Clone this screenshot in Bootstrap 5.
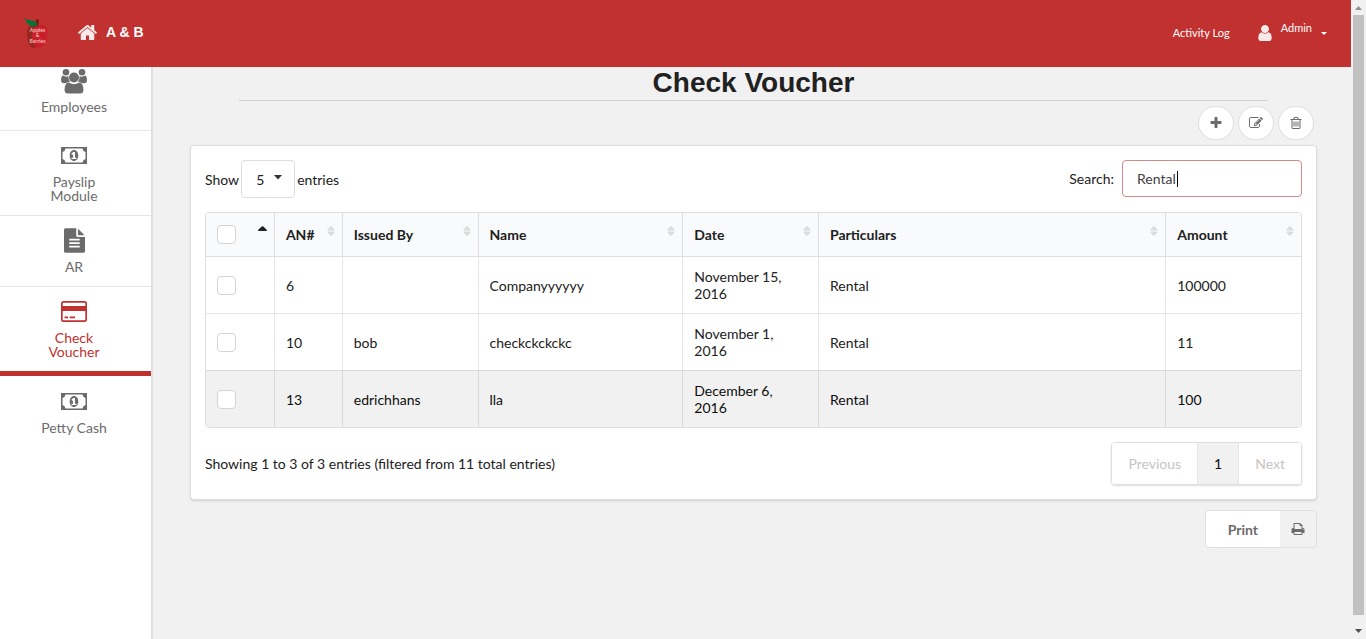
<!DOCTYPE html>
<html lang="en">
<head>
<meta charset="utf-8">
<meta name="viewport" content="width=device-width, initial-scale=1">
<title>Check Voucher</title>
<link href="https://cdn.jsdelivr.net/npm/bootstrap@5.3.0/dist/css/bootstrap.min.css" rel="stylesheet">
<style>
:root{--brand:#c13130;--line:#dededf;--soft:#e6e6e7;--page:#f1f1f1;--ink:#212121;--muted:#6b6b6b}
body{font-family:Lato,"Liberation Sans",sans-serif;font-size:14px;line-height:17px;color:var(--ink);background:var(--page)}
svg{display:block;fill:currentColor;flex:none}
a{text-decoration:none}
.topbar{background:var(--brand);min-height:67px;padding:0 24px 2px}
.brand-name{font:bold 14px/17px "Liberation Sans",sans-serif}
.toplink{font-size:11px;line-height:16px;color:#fff}
.admin-toggle{gap:9px;color:#fff;padding:0;border:0;background:none}
.admin-toggle .toplink{margin-bottom:9px}
.sidenav{width:153px;background:#fff;border-right:2px solid #dfdfdf;flex:none}
.side-item{color:var(--muted);padding:12px 39px 12px 36px;line-height:14px;border-bottom:1px solid var(--soft);gap:7px;text-align:center}
.side-item svg{height:25px;overflow:visible}
.side-item.first-item{padding-top:2px;padding-bottom:16px;gap:6px}
.side-item.current{color:var(--brand);border-bottom:5px solid var(--brand);margin-bottom:1px}
.side-item:last-child{border-bottom:0}
.content{padding:0 34px 0 37px}
.page-title{font:bold 28px/31px "Liberation Sans",sans-serif;margin:0 49px;padding-bottom:2px;border-bottom:1px solid #d1d1d2;text-align:center}
.actions{padding:5px 3px 5px 0}
.round-btn{width:36px;height:34px;border:1px solid var(--line);border-radius:18px;background:#fff;color:var(--muted);padding:0}
.panel{background:#fff;border:1px solid var(--line);border-radius:4px;box-shadow:0 1px 2px rgba(34,36,38,.15);padding:14px}
.panel-tools{margin-bottom:14px}
.panel-foot{margin-top:14px}
.len-wrap{margin:0 2px}
.len-select{width:54px;height:38px;border:1px solid var(--line);border-radius:4px;background:#fff;appearance:none;padding:0 14px;color:var(--ink)}
.len-arrow{right:13px;top:15px;pointer-events:none;color:#333}
.search-box{width:180px;height:37px;border:1px solid #d28a8d;border-radius:4px;padding:0 14px;outline:0;color:#404040}
.text-caret{left:55px;top:11px;width:1px;height:16px;background:#000}
.grid-table{width:100%;table-layout:fixed;border-collapse:separate;border-spacing:0;border:1px solid var(--line);border-radius:4px;overflow:hidden}
.grid-table th,.grid-table td{border-left:1px solid var(--soft);padding:11px}
.grid-table th{height:44px;background:#f9fafb;border-bottom:1px solid var(--line);border-left-color:var(--line);padding:0 7px 0 11px}
.grid-table td{height:57px;border-top:1px solid var(--soft)}
.grid-table tbody tr:first-child td{border-top:0;height:56px}
.grid-table th:first-child,.grid-table td:first-child{border-left:0}
.grid-table tr.hovered td{background:#f1f1f1;border-color:#d9d9da;color:#0d0d0d}
.w1{width:6.2%}.w2{width:12.4%}.w3{width:18.7%}
.sorter{color:#dcdcdc;margin-bottom:8px}
.sorter.asc{color:#222;margin-bottom:12px}
.tick{appearance:none;display:block;width:19px;height:19px;border:1px solid #d4d4d5;border-radius:4px;background:#fff;margin:0}
.pager{border:1px solid var(--line);border-radius:4px;box-shadow:0 1px 2px rgba(34,36,38,.15);overflow:hidden}
.pager button{border:0;background:#fff;padding:12px 16px;height:41px;color:#c4c4c4}
.pager button+button{border-left:1px solid var(--soft)}
.pager button.on{background:var(--page);color:#0d0d0d}
.print-row{margin-top:10px}
.print-btn{border:1px solid var(--line);border-radius:4px;background:#fff;color:var(--muted);height:38px;padding:0;overflow:hidden}
.print-btn span{padding:0 22px}
.print-btn i{width:36px;background:var(--page)}
.scroller{width:15px;background:var(--page);color:#505050;flex:none}
.scroll-thumb{width:11px;background:#c1c1c1}
</style>
</head>
<body>
<svg class="d-none" aria-hidden="true">
<symbol id="sort" viewBox="0 0 8 10"><path d="M1 4.500Q0 4.500 .5 3.500L3.300.5Q4 0 4.700.5L7.500 3.500Q8 4.500 7 4.500ZM1 5.500H7Q8 5.500 7.500 6.500L4.700 9.500Q4 10 3.300 9.500L.5 6.500Q0 5.500 1 5.500Z"/></symbol>
<symbol id="money" viewBox="0 0 26 25"><path fill-rule="evenodd" d="M0 4H26V21H0ZM4.500 5.500Q4.200 8.500 1.500 9V16Q4.200 16.500 4.500 19.500H21.500Q21.800 16.500 24.500 16V9Q21.800 8.500 21.500 5.500ZM13 7C15.500 7 17.300 9.300 17.300 12.500S15.500 18 13 18 8.700 15.700 8.700 12.500 10.500 7 13 7ZM12.300 9L10.300 10.800 11.300 11.900 12.100 11.200V14.800H10.500V16H15.500V14.800H14V9Z"/></symbol>
</svg>
<div class="d-flex vh-100 overflow-hidden">
  <div class="d-flex flex-column flex-grow-1">
    <header class="topbar d-flex align-items-center">
      <a href="#" aria-label="Apples and Berries">
        <svg width="25" height="32" viewBox="0 0 25 32">
          <path d="M12 11Q13 6 11.500 3L14.500 2Q15.500 5 13.500 11Z" fill="#68201a"/>
          <path d="M12 9C9 6 3 8 3 17C3 24 6 31 10 31Q12.500 30 15 31C20 30 23.500 24 23.500 17C24 9 18 6 14 9Q13 10 12 9Z" fill="#c91f2a"/>
          <path d="M12 9C9 6 3 8 3 17C3 24 6 31 10 31Q11 30 12 30Q7 24 8 18T12 9Z" fill="#96281f"/>
          <path d="M.5.5Q2 3 6 3Q11 3 13.500 8Q9 11 5 8Q2 6 .5.5Z" fill="#0a7036"/>
          <g fill="#f0bcb8" font-family="Lato,sans-serif" font-size="5" font-weight="700" text-anchor="middle"><text x="13.500" y="15">Apples</text><text x="13.500" y="20">&amp;</text><text x="13.500" y="26">Berries</text></g>
        </svg>
      </a>
      <a href="#" class="d-flex align-items-center gap-2 text-white ms-4 ps-1">
        <svg width="21" height="21" viewBox="0 0 1792 1792" opacity=".9"><path d="M1472 992v480q0 26-19 45t-45 19h-384v-384h-256v384h-384q-26 0-45-19t-19-45v-480q0-1 .5-3t.5-3l575-474 575 474q1 2 1 6zm223-69l-62 74q-8 9-21 11h-3q-13 0-21-7l-692-577-692 577q-12 8-24 7-13-2-21-11l-62-74q-8-10-7-23.500t11-21.500l719-599q32-26 76-26t76 26l244 204v-195q0-14 9-23t23-9h192q14 0 23 9t9 23v408l219 182q10 8 11 21.500t-7 23.500z"/></svg>
        <span class="brand-name">A &amp; B</span>
      </a>
      <nav class="d-flex align-items-center ms-auto gap-4">
        <a href="#" class="toplink">Activity Log</a>
        <button type="button" class="admin-toggle d-flex align-items-center ps-1">
          <svg width="14" height="16" viewBox="256 128 1280 1536" opacity=".9"><path d="M1536 1399q0 109-62.500 187t-150.500 78h-854q-88 0-150.500-78t-62.500-187q0-85 8.500-160.500t31.500-152 58.500-131 94-89 134.500-34.500q131 128 313 128t313-128q76 0 134.500 34.500t94 89 58.500 131 31.500 152 8.500 160.500zm-256-887q0 159-112.500 271.500t-271.500 112.500-271.500-112.500-112.500-271.500 112.500-271.500 271.500-112.500 271.500 112.500 112.500 271.500z"/></svg>
          <span class="toplink">Admin</span>
          <svg width="6" height="4" viewBox="0 0 6 4"><path d="M0 1H6L3 4Z"/></svg>
        </button>
      </nav>
    </header>
    <div class="d-flex flex-grow-1">
      <nav class="sidenav d-flex flex-column">
        <a href="#" class="side-item first-item d-flex flex-column align-items-center">
          <svg width="26" height="25" viewBox="0 0 26 25"><circle cx="5" cy="3.300" r="3.300"/><circle cx="21" cy="3.300" r="3.300"/><path d="M2 6.500Q5 8.500 7.500 7Q7 10.500 9 12.800Q6.500 13 5.200 14.200H2.500Q0 14 0 11.500Q0 7 2 6.500ZM24 6.500Q21 8.500 18.500 7Q19 10.500 17 12.800Q19.500 13 20.800 14.200H23.500Q26 14 26 11.500Q26 7 24 6.500Z"/><circle cx="13" cy="8.500" r="5"/><path d="M8 13.500Q13 17 18 13.500Q22.400 13.700 22.400 21Q22.400 24.500 19 24.500H7Q3.600 24.500 3.600 21Q3.600 13.700 8 13.500Z"/></svg>
          Employees</a>
        <a href="#" class="side-item d-flex flex-column align-items-center"><svg width="26"><use href="#money"/></svg>Payslip Module</a>
        <a href="#" class="side-item d-flex flex-column align-items-center">
          <svg width="21" viewBox="128 0 1536 1792"><path d="M1596 476q14 14 28 36h-472v-472q22 14 36 28zm-476 164h544v1056q0 40-28 68t-68 28h-1344q-40 0-68-28t-28-68v-1600q0-40 28-68t68-28h800v544q0 40 28 68t68 28zm160 736v-64q0-14-9-23t-23-9h-704q-14 0-23 9t-9 23v64q0 14 9 23t23 9h704q14 0 23-9t9-23zm0-256v-64q0-14-9-23t-23-9h-704q-14 0-23 9t-9 23v64q0 14 9 23t23 9h704q14 0 23-9t9-23zm0-256v-64q0-14-9-23t-23-9h-704q-14 0-23 9t-9 23v64q0 14 9 23t23 9h704q14 0 23-9t9-23z"/></svg>AR</a>
        <a href="#" class="side-item current d-flex flex-column align-items-center">
          <svg width="26" viewBox="0 0 26 25"><path fill-rule="evenodd" d="M2.500 2H23.500Q26 2 26 4.500V20.500Q26 23 23.500 23H2.500Q0 23 0 20.500V4.500Q0 2 2.500 2ZM2.500 3.700Q1.700 3.700 1.700 4.500V7H24.300V4.500Q24.300 3.700 23.500 3.700ZM1.700 12V20.500Q1.700 21.300 2.500 21.300H23.500Q24.300 21.300 24.300 20.500V12ZM3.500 17.500H7V19.300H3.500ZM8.700 17.500H14V19.300H8.700Z"/></svg>Check Voucher</a>
        <a href="#" class="side-item d-flex flex-column align-items-center"><svg width="26"><use href="#money"/></svg>Petty Cash</a>
      </nav>
      <main class="content flex-grow-1">
        <h1 class="page-title">Check Voucher</h1>
        <div class="actions d-flex justify-content-end gap-1">
          <button type="button" aria-label="Add" class="round-btn d-flex align-items-center justify-content-center"><svg width="14" height="14" viewBox="0 0 1792 1792"><path d="M1600 736v192q0 40-28 68t-68 28h-416v416q0 40-28 68t-68 28h-192q-40 0-68-28t-28-68v-416h-416q-40 0-68-28t-28-68v-192q0-40 28-68t68-28h416v-416q0-40 28-68t68-28h192q40 0 68 28t28 68v416h416q40 0 68 28t28 68z"/></svg></button>
          <button type="button" aria-label="Edit" class="round-btn d-flex align-items-center justify-content-center"><svg width="14" height="14" viewBox="0 0 1792 1792"><path d="M888 1184l116-116-152-152-116 116v56h96v96h56zm440-720q-16-16-33 1l-350 350q-17 17-1 33t33-1l350-350q17-17 1-33zm80 594v190q0 119-84.500 203.500t-203.500 84.500h-832q-119 0-203.500-84.500t-84.500-203.500v-832q0-119 84.500-203.500t203.500-84.500h832q63 0 117 25 15 7 18 23 3 17-9 29l-49 49q-14 14-32 8-23-6-45-6h-832q-66 0-113 47t-47 113v832q0 66 47 113t113 47h832q66 0 113-47t47-113v-126q0-13 9-22l64-64q15-15 35-7t20 29zm-96-738l288 288-672 672h-288v-288zm444 132l-92 92-288-288 92-92q28-28 68-28t68 28l152 152q28 28 28 68t-28 68z"/></svg></button>
          <button type="button" aria-label="Delete" class="round-btn d-flex align-items-center justify-content-center"><svg width="14" height="14" viewBox="0 0 1792 1792"><path d="M704 736v576q0 14-9 23t-23 9h-64q-14 0-23-9t-9-23v-576q0-14 9-23t23-9h64q14 0 23 9t9 23zm256 0v576q0 14-9 23t-23 9h-64q-14 0-23-9t-9-23v-576q0-14 9-23t23-9h64q14 0 23 9t9 23zm256 0v576q0 14-9 23t-23 9h-64q-14 0-23-9t-9-23v-576q0-14 9-23t23-9h64q14 0 23 9t9 23zm128 724v-948h-896v948q0 22 7 40.500t14.500 27 10.500 8.500h832q3 0 10.500-8.500t14.500-27 7-40.500zm-672-1076h448l-48-117q-7-9-17-11h-317q-10 2-17 11zm928 32v64q0 14-9 23t-23 9h-96v948q0 83-47 143.500t-113 60.500h-832q-66 0-113-58.500t-47-141.500v-952h-96q-14 0-23-9t-9-23v-64q0-14 9-23t23-9h309l70-167q15-37 54-63t79-26h320q40 0 79 26t54 63l70 167h309q14 0 23 9t9 23z"/></svg></button>
        </div>
        <section class="panel">
          <div class="panel-tools d-flex justify-content-between align-items-start">
            <div class="d-flex align-items-center">
              <label for="len">Show</label>
              <div class="len-wrap position-relative">
                <select id="len" class="len-select d-block"><option>5</option><option>10</option></select>
                <svg class="len-arrow position-absolute" width="8" height="5" viewBox="0 0 8 5"><path d="M0 0H8L4 4.500Z"/></svg>
              </div>
              <span>entries</span>
            </div>
            <div class="d-flex align-items-center gap-2">
              <label for="find">Search:</label>
              <div class="position-relative">
                <input id="find" type="text" class="search-box d-block" value="Rental">
                <span class="text-caret position-absolute"></span>
              </div>
            </div>
          </div>
          <table class="grid-table">
            <thead><tr>
              <th class="w1"><div class="d-flex align-items-center justify-content-between"><input type="checkbox" class="tick" aria-label="Select all"><svg class="sorter asc" width="9" height="5" viewBox="0 0 9 5"><path d="M.5 5Q-.3 4.500.5 3.500L3.700.5Q4.500 0 5.300.5L8.500 3.500Q9.300 4.500 8.500 5Z"/></svg></div></th>
              <th class="w1"><div class="d-flex align-items-center justify-content-between">AN#<svg class="sorter" width="8" height="10"><use href="#sort"/></svg></div></th>
              <th class="w2"><div class="d-flex align-items-center justify-content-between">Issued By<svg class="sorter" width="8" height="10"><use href="#sort"/></svg></div></th>
              <th class="w3"><div class="d-flex align-items-center justify-content-between">Name<svg class="sorter" width="8" height="10"><use href="#sort"/></svg></div></th>
              <th class="w2"><div class="d-flex align-items-center justify-content-between">Date<svg class="sorter" width="8" height="10"><use href="#sort"/></svg></div></th>
              <th><div class="d-flex align-items-center justify-content-between">Particulars<svg class="sorter" width="8" height="10"><use href="#sort"/></svg></div></th>
              <th class="w2"><div class="d-flex align-items-center justify-content-between">Amount<svg class="sorter" width="8" height="10"><use href="#sort"/></svg></div></th>
            </tr></thead>
            <tbody>
              <tr><td><input type="checkbox" class="tick" aria-label="Select 6"></td><td>6</td><td></td><td>Companyyyyyy</td><td>November 15, 2016</td><td>Rental</td><td>100000</td></tr>
              <tr><td><input type="checkbox" class="tick" aria-label="Select 10"></td><td>10</td><td>bob</td><td>checkckckckc</td><td>November 1, 2016</td><td>Rental</td><td>11</td></tr>
              <tr class="hovered"><td><input type="checkbox" class="tick" aria-label="Select 13"></td><td>13</td><td>edrichhans</td><td>lla</td><td>December 6, 2016</td><td>Rental</td><td>100</td></tr>
            </tbody>
          </table>
          <div class="panel-foot d-flex justify-content-between align-items-center">
            <div>Showing 1 to 3 of 3 entries (filtered from 11 total entries)</div>
            <div class="pager d-flex"><button type="button">Previous</button><button type="button" class="on">1</button><button type="button">Next</button></div>
          </div>
        </section>
        <div class="print-row d-flex justify-content-end">
          <button type="button" class="print-btn d-flex align-items-center fw-bold"><span>Print</span><i class="d-flex h-100 align-items-center justify-content-center"><svg width="14" height="14" viewBox="0 0 1792 1792"><path d="M448 1536h896v-256h-896v256zm0-640h896v-384h-160q-40 0-68-28t-28-68v-160h-640v640zm1152 64q0-26-19-45t-45-19-45 19-19 45 19 45 45 19 45-19 19-45zm128 0v416q0 13-9.500 22.500t-22.500 9.500h-224v160q0 40-28 68t-68 28h-960q-40 0-68-28t-28-68v-160h-224q-13 0-22.500-9.500t-9.500-22.500v-416q0-79 56.500-135.500t135.500-56.500h64v-544q0-40 28-68t68-28h672q40 0 88 20t76 48l152 152q28 28 48 76t20 88v256h64q79 0 135.500 56.500t56.500 135.500z"/></svg></i></button>
        </div>
      </main>
    </div>
  </div>
  <div class="scroller d-flex flex-column align-items-center" aria-hidden="true">
    <svg width="7" height="15" viewBox="0 0 7 15" opacity=".6"><path d="M0 10H7L3.500 6Z"/></svg>
    <div class="scroll-thumb flex-grow-1"></div>
    <svg width="7" height="24" viewBox="0 0 7 24"><path d="M0 14H7L3.500 18Z"/></svg>
  </div>
</div>
<script src="https://cdn.jsdelivr.net/npm/bootstrap@5.3.0/dist/js/bootstrap.bundle.min.js"></script>
</body>
</html>
